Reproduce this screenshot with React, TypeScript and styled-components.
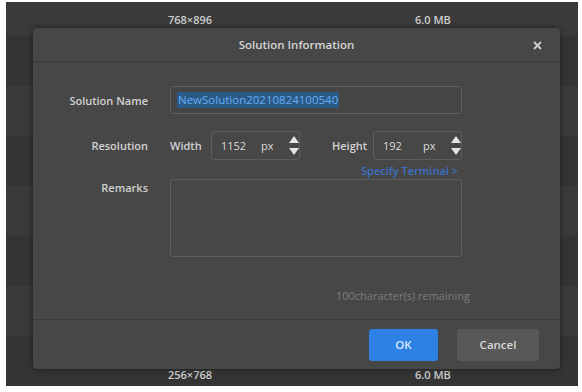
import React from "react";
import styled, { createGlobalStyle } from "styled-components";

const Global = createGlobalStyle`
  html, body { margin: 0; padding: 0; background: #ffffff; }
  body { font-family: "Open Sans", "Noto Sans", Arial, sans-serif; }
`;

const Frame = styled.div`
  position: relative;
  margin: 2px 4px 0 6px;
  width: 572px;
  height: 384px;
  background: #3a3a3a;
  overflow: hidden;
`;

const List = styled.div`
  display: flex;
  flex-direction: column;
`;

const ListRow = styled.div<{ $h: number; $tone: string; $align?: string }>`
  height: ${(p) => p.$h}px;
  box-sizing: border-box;
  padding-bottom: ${(p) => (p.$align === "end" ? "4px" : "0")};
  background: ${(p) => p.$tone};
  display: grid;
  grid-template-columns: 162px 247px 1fr;
  align-items: ${(p) => p.$align || "center"};
  color: #cfcfcf;
  font-size: 11px;
  font-weight: 600;
`;

const Cell = styled.span<{ $col: number }>`
  grid-column: ${(p) => p.$col};
`;

const Dialog = styled.div`
  position: absolute;
  left: 27px;
  top: 26px;
  width: 527px;
  height: 341px;
  background: #474747;
  border-radius: 4px;
  box-shadow: 0 0 6px rgba(0, 0, 0, 0.45);
  display: flex;
  flex-direction: column;
`;

const TitleBar = styled.div`
  height: 33px;
  border-bottom: 1px solid #393939;
  display: flex;
  align-items: center;
  justify-content: center;
  position: relative;
  color: #d6d6d6;
  font-size: 11.5px;
  font-weight: 600;
`;

const Close = styled.button`
  position: absolute;
  right: 16px;
  top: 10px;
  width: 14px;
  height: 14px;
  padding: 0;
  border: 0;
  background: transparent;
  display: flex;
  align-items: center;
  justify-content: center;
`;

const Body = styled.div`
  flex: 1;
  padding-top: 24px;
  display: grid;
  grid-template-columns: 115px 292px;
  column-gap: 22px;
  grid-auto-rows: min-content;
  align-content: start;
`;

const Label = styled.div<{ $top?: boolean }>`
  color: #d2d2d2;
  font-size: 11px;
  font-weight: 600;
  text-align: right;
  align-self: ${(p) => (p.$top ? "start" : "center")};
  padding-top: ${(p) => (p.$top ? "1px" : "0")};
`;

const TextBox = styled.div`
  height: 28px;
  box-sizing: border-box;
  border: 1px solid #5d5d5d;
  border-radius: 3px;
  background: #454545;
  display: flex;
  align-items: center;
  padding-left: 6px;
`;

const Selected = styled.span`
  background: #2c5a86;
  color: #63aef5;
  font-size: 11.5px;
  line-height: 16px;
  padding: 0 1px;
`;

const ResRow = styled.div`
  display: flex;
  align-items: center;
  height: 29px;
`;

const SubLabel = styled.span<{ $w: number }>`
  width: ${(p) => p.$w}px;
  color: #d2d2d2;
  font-size: 11px;
  font-weight: 600;
`;

const NumBox = styled.div`
  width: 89px;
  height: 29px;
  box-sizing: border-box;
  border: 1px solid #5d5d5d;
  border-radius: 3px;
  display: flex;
  align-items: center;
  padding-left: 9px;
  color: #dcdcdc;
  font-size: 11px;
`;

const Num = styled.span`
  width: 40px;
`;

const Unit = styled.span`
  width: 28px;
`;

const Spinner = styled.div`
  display: flex;
  flex-direction: column;
  gap: 5px;
  align-items: center;
`;

const Link = styled.div`
  grid-column: 2;
  justify-self: end;
  margin-right: 4px;
  margin-top: 4px;
  margin-bottom: 1px;
  color: #3a72c4;
  font-size: 11px;
  font-weight: 600;
  line-height: 14px;
`;

const Remarks = styled.div`
  grid-column: 2;
  height: 78px;
  box-sizing: border-box;
  border: 1px solid #5d5d5d;
  border-radius: 3px;
`;

const Remaining = styled.div`
  grid-column: 2;
  justify-self: end;
  margin-right: -8px;
  margin-top: 31px;
  color: #7e7e7e;
  font-size: 11px;
`;

const Footer = styled.div`
  height: 49px;
  border-top: 1px solid #393939;
  display: flex;
  align-items: center;
  justify-content: flex-end;
  gap: 19px;
  padding-right: 21px;
`;

const Button = styled.button<{ $primary?: boolean }>`
  height: 32px;
  width: ${(p) => (p.$primary ? "69px" : "82px")};
  border: 0;
  border-radius: 3px;
  background: ${(p) => (p.$primary ? "#2d80e4" : "#585858")};
  color: ${(p) => (p.$primary ? "#d8e8ff" : "#d6d6d6")};
  font-family: inherit;
  font-size: 11.5px;
  font-weight: 600;
`;

const Arrow = ({ up }: { up?: boolean }) => (
  <svg width="10" height="7" viewBox="0 0 10 7">
    <path d={up ? "M5 0 L10 7 L0 7 Z" : "M0 0 L10 0 L5 7 Z"} fill="#e4e4e4" />
  </svg>
);

const Spin = () => (
  <Spinner>
    <Arrow up />
    <Arrow />
  </Spinner>
);

const rows = ["#343434", "#3a3a3a", "#343434", "#3a3a3a", "#343434", "#3a3a3a"];

export default function App() {
  return (
    <>
      <Global />
      <Frame>
        <List>
          <ListRow $h={34} $tone="#3a3a3a">
            <Cell $col={2}>768×896</Cell>
            <Cell $col={3}>6.0 MB</Cell>
          </ListRow>
          {rows.map((tone, i) => (
            <ListRow key={i} $h={50} $tone={tone} />
          ))}
          <ListRow $h={50} $tone="#343434" $align="end">
            <Cell $col={2}>256×768</Cell>
            <Cell $col={3}>6.0 MB</Cell>
          </ListRow>
        </List>
        <Dialog>
          <TitleBar>
            Solution Information
            <Close aria-label="close">
              <svg width="9" height="9" viewBox="0 0 9 9">
                <path d="M1 1 L8 8 M8 1 L1 8" stroke="#cfcfcf" strokeWidth="1.8" />
              </svg>
            </Close>
          </TitleBar>
          <Body>
            <Label>Solution Name</Label>
            <TextBox>
              <Selected>NewSolution20210824100540</Selected>
            </TextBox>
            <Label style={{ marginTop: 17 }}>Resolution</Label>
            <ResRow style={{ marginTop: 17 }}>
              <SubLabel $w={41}>Width</SubLabel>
              <NumBox>
                <Num>1152</Num>
                <Unit>px</Unit>
                <Spin />
              </NumBox>
              <SubLabel $w={41} style={{ marginLeft: 32 }}>Height</SubLabel>
              <NumBox>
                <Num>192</Num>
                <Unit>px</Unit>
                <Spin />
              </NumBox>
            </ResRow>
            <Link>Specify Terminal &gt;</Link>
            <Label $top>Remarks</Label>
            <Remarks />
            <Remaining>100character(s) remaining</Remaining>
          </Body>
          <Footer>
            <Button $primary>OK</Button>
            <Button>Cancel</Button>
          </Footer>
        </Dialog>
      </Frame>
    </>
  );
}
